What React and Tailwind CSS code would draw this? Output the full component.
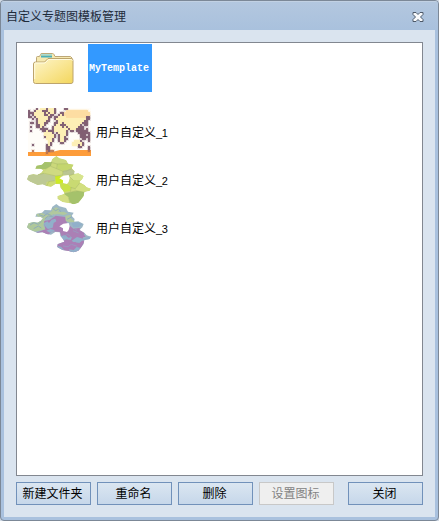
import React from "react";

function FolderIcon() {
  return (
    <svg className="h-12 w-16 shrink-0" viewBox="0 0 64 48">
      <defs>
        <linearGradient id="folder" x1="0" y1="0" x2="1" y2="1">
          <stop offset="0" stopColor="#fdf5cd" />
          <stop offset="0.5" stopColor="#f9e694" />
          <stop offset="1" stopColor="#f3d65c" />
        </linearGradient>
      </defs>
      <path d="M8.500 20V13.500q0-1 1-1h2l1-2q0-1 1.500-1h10.500q1 0 1.500 1l1 2h15.500l1.500 1.500v3" fill="#f6e9b0" stroke="#bda777" />
      <path d="M13 11.500h11v2H13z" fill="#4aafb9" />
      <path d="M13 10.500h11" stroke="#a9dcd2" />
      <path d="M5.500 20q0-2 2-2h9l3.500-3.500h23q2 0 2 2v21q0 2-2 2h-35.500q-2 0-2-2z" fill="url(#folder)" stroke="#bda46c" />
      <path d="M6.700 35V20q0-1 1-1H17l3.500-3.500h22q2 0 2 1" fill="none" stroke="#fffbe0" />
    </svg>
  );
}

// Coarse world raster: P = outline, Y = land, O = northern zone, B = antarctic edge.
const WORLD = [
  "....P.YYYPYYYP....PP............",
  "P..PYYYPPPYYYP.....OOOOOOOOOOO..",
  "PPPYYYYYPYPYYP..PPOOOOOOOOOOOOO.",
  "P.PYYYYYPPYPP..PYPOOOOOOOOOOOOO.",
  "PP.PYYYYYYPP.PPYYYYOOOOOOOOOOPP.",
  "..P.PYYYYYP..PYYYYYYYYYYYYYYYPP.",
  "....PYYYYPP...PYYYYYYYYYYYYYPP..",
  ".PP.PYYYPP...PPYYPYYYYYYYYYPPP..",
  "....PPYYP....PYYPPPYYYYYYYP.PP..",
  ".P..PPYP....PYYYYPYPYYYYYPPP....",
  "......PPPP..PYYYYYYYPYYYPPPP.P..",
  ".P.....PPYPPPYYYYYYP.PP.PPPPPP..",
  "........YYYYP.PYYYYP.....PPPPPP.",
  "........YYYYYP.PYYYP......PPP.P.",
  "........PYYYYP.PYYP.......PPPPP.",
  ".........YYYP..PYYPP.......PP.P.",
  "..........YYP..PYYP....YYYP...P.",
  "..........YP....PP....YYYYYP....",
  "..P......PYP..........YYYPYP....",
  ".........PP..............PP...P.",
  ".........PP...................P.",
  "..B......BPBB.................B.",
  ".........B......................",
];
const WORLD_COLORS = { P: "#775369", Y: "#fdeeb0", O: "#fddb9c", B: "#b8714d" };

function WorldMap() {
  const cells = WORLD.flatMap((line, y) =>
    [...line].map((c, x) => ({ c, x, y })).filter(({ c }) => c !== ".")
  );
  return (
    <svg className="h-12 w-16 shrink-0" viewBox="0 0 64 48">
      <rect width="63" height="48" fill="#fffdf9" />
      <path d="M0 44h24l8-2h31v6H0z" fill="#fd9c3a" />
      {cells.map(({ c, x, y }) => (
        <rect key={`h${x}-${y}`} x={x * 2 - 1} y={y * 2 - 1} width="4" height="4" fill={WORLD_COLORS[c]} opacity="0.14" />
      ))}
      {cells.map(({ c, x, y }) => (
        <rect key={`c${x}-${y}`} x={x * 2} y={y * 2} width="2" height="2" fill={WORLD_COLORS[c]} opacity="0.88" />
      ))}
    </svg>
  );
}

const REGION =
  "M33 82L38 70 52 66 64 68 75 62 81 55 73 50 58 50 62 41 78 38 86 30 105 31 109 20 121 12 130 19 150 24 156 35 173 38 167 48 176 57 174 65 187 64 203 72 199 82 190 90 205 98 212 106 225 110 221 117 205 120 203 132 194 144 187 152 173 157 158 153 140 150 124 141 125 132 145 125 142 118 133 108 131 97 118 96 105 104 92 102 80 97 65 99 50 92 40 88Z";
const HOLE = "M142 71L158 69 161 78 158 90 153 96 141 93 141 85 130 79Z";

function GreenMap() {
  return (
    <svg className="h-12 w-16 shrink-0 overflow-visible" viewBox="36 12 192 144">
      <defs>
        <clipPath id="green-clip"><path d={REGION} /></clipPath>
      </defs>
      <g clipPath="url(#green-clip)">
        <path d={REGION} fill="#cbd87a" />
        <path d="M55 52L60 38 84 28 108 30 104 42 88 51Z" fill="#a5c26b" />
        <path d="M30 82L38 66 64 68 85 64 112 68 122 74 116 86 98 89 92 104 60 100Z" fill="#bdc994" />
        <path d="M84 60L104 43 124 52 139 57 140 69 120 72 85 66Z" fill="#cfda81" />
        <path d="M104 28L122 10 156 26 160 36 124 36Z" fill="#cad87f" />
        <path d="M122 35L174 36 168 50 152 57 126 50Z" fill="#c4d66e" />
        <path d="M141 57L166 51 180 60 174 66 158 71 142 68Z" fill="#bac592" />
        <path d="M92 90L106 86 120 93 116 106 90 104Z" fill="#cedb74" />
        <path d="M117 73L132 71 142 84 140 94 120 95Z" fill="#cdea24" />
        <path d="M131 94L153 95 166 106 162 117 143 120Z" fill="#c9e24a" />
        <path d="M145 125L170 119 207 113 204 136 188 158 170 158 157 144Z" fill="#a5c26b" />
        <path d="M120 132L145 127 158 136 162 154 140 152Z" fill="#d3de83" />
        <path d="M160 73L187 62 205 72 197 84 172 85Z" fill="#d7e48d" />
        <path d="M159 88L172 84 194 86 190 96 178 110 163 106Z" fill="#c9da72" />
        <path d="M178 110L191 93 228 110 206 121 182 116Z" fill="#d2df80" />
        <path d="M105 31L124 36 157 35M124 36L122 50 139 57 152 57 167 50M88 51L104 42 105 31M104 43L122 50M65 68L85 64 120 72 140 69 141 57M116 86L98 89 92 103M158 71L174 66M172 85L160 73M163 106L178 110 191 93M145 125L170 119 182 116 206 121M157 136L162 154M166 106L163 119" fill="none" stroke="#a3b56c" strokeWidth="1.3" />
      </g>
      <path d={HOLE} fill="#fff" />
    </svg>
  );
}

function PurpleMap() {
  return (
    <svg className="h-12 w-16 shrink-0 overflow-visible" viewBox="36 12 192 144">
      <defs>
        <clipPath id="purple-clip"><path d={REGION} /></clipPath>
      </defs>
      <path d={REGION} fill="#9db7c5" />
      <g clipPath="url(#purple-clip)">
        <path d="M83 63L101 60 119 47 148 51 152 67 165 80 172 86 190 84 205 100 200 115 205 125 188 158H120L120 135 142 124 132 96 108 94 96 106 76 97 58 99 88 88Z" fill="#ab80b5" />
        <path d="M32 86L34 70 60 64 80 56 85 65 82 76 88 88 62 94 48 97Z" fill="#afc89b" />
        <path d="M60 42L78 39 91 45 108 33 116 38 106 48 90 54 86 62 70 57ZM107 28L121 22 133 29 126 36 144 35 155 41 143 45 125 42 114 44ZM148 47L165 44 163 54 179 66 159 67 149 62Z" fill="#b1c89e" />
        <path d="M42 75L54 68 67 73 76 64M53 86L67 78 76 84M69 44L82 49 93 41 107 47M86 57L97 48 113 51M109 25L119 32 128 27 134 35M153 58L168 50" fill="none" stroke="#8eabba" strokeWidth="3" />
        <path d="M83 70L94 64 99 69 107 59 118 56 121 64 113 69 110 83 96 87 89 81ZM91 92L103 87 117 91 102 98ZM167 70L182 65 200 73 188 81 172 82ZM134 109L148 105 157 113 168 111 164 120 150 118 141 124ZM167 122L183 111 202 116 228 108 217 121 198 122 190 129 172 126Z" fill="#91b0ca" />
        <path d="M124 137L136 141 145 151 126 146ZM158 148L173 150 182 141 194 144 180 158H164Z" fill="#91b0ca" />
        <path d="M141 128L154 121 162 134 178 125 184 138 161 148 140 145ZM190 98L202 101 209 110 192 114Z" fill="#ac7fb8" />
        <path d="M140 104L147 109 154 102 166 111M141 138L156 140 166 133 184 139M171 92L188 99M175 86L183 91" fill="none" stroke="#93a5c1" strokeWidth="2" />
      </g>
      <path d={HOLE} fill="#fff" />
    </svg>
  );
}

function Row({ icon, name, index }) {
  return (
    <div className="flex h-12 items-center pl-[11px]">
      {icon}
      <span className="ml-1 whitespace-nowrap pt-px leading-4 text-black">
        {name}
        <span className="font-['Liberation_Sans'] text-[11px] tracking-[-0.4px]">_{index}</span>
      </span>
    </div>
  );
}

function Button({ children, disabled = false, className = "" }) {
  return (
    <button
      disabled={disabled}
      className={`flex h-[23px] w-[75px] items-center justify-center whitespace-nowrap border pr-[2px] ${
        disabled
          ? "border-[#c8c8c8] bg-[#efefef] text-[#838383]"
          : "border-[#7191ba] bg-linear-to-b from-[#dbe6f1] to-[#c6d7ea] text-black"
      } ${className}`}
    >
      {children}
    </button>
  );
}

export default function App() {
  return (
    <div className="h-[521px] w-[439px] bg-[#d3dce7] font-['Liberation_Sans','Noto_Sans_CJK_SC',sans-serif] text-[12px]">
      <div className="flex h-full flex-col overflow-hidden rounded-[4px] border border-[#7c8897] bg-[#a9c1de]">
        <header className="flex h-[29px] shrink-0 items-center justify-between border-t border-[#c2d1e3] bg-linear-to-b from-[#b3c7df] to-[#a9c1dd] pl-[5px] pr-[14px] text-[#1e2b3a]">
          <h1 className="pt-px leading-4">自定义专题图模板管理</h1>
          <svg className="mt-[2px] h-[10px] w-[12px]" viewBox="0 0 12 10">
            <path d="M1 .5h3l2 2 2-2h3v2L8.500 5 11 7.500v2H8l-2-2-2 2H1v-2L3.500 5 1 2.500z" fill="#f8fafc" stroke="#4d5968" />
          </svg>
        </header>
        <main className="mx-[3px] mb-[3px] flex min-h-0 flex-1 flex-col bg-[#dae4ef] px-3 pb-3 pt-3">
          <div className="h-[434px] w-[407px] shrink-0 border border-[#828790] bg-white pt-px">
            <div className="flex h-16 items-start pl-[11px]">
              <FolderIcon />
              <div className="ml-[-4px] flex h-12 w-16 items-center bg-[#3399ff] pl-[1px] pt-px font-['Liberation_Mono',monospace] text-[10px] font-bold text-white">
                MyTemplate
              </div>
            </div>
            <Row icon={<WorldMap />} name="用户自定义" index={1} />
            <Row icon={<GreenMap />} name="用户自定义" index={2} />
            <Row icon={<PurpleMap />} name="用户自定义" index={3} />
          </div>
          <div className="mt-[6px] flex gap-[6px]">
            <Button>新建文件夹</Button>
            <Button>重命名</Button>
            <Button>删除</Button>
            <Button disabled>设置图标</Button>
            <Button className="ml-2">关闭</Button>
          </div>
        </main>
      </div>
    </div>
  );
}
